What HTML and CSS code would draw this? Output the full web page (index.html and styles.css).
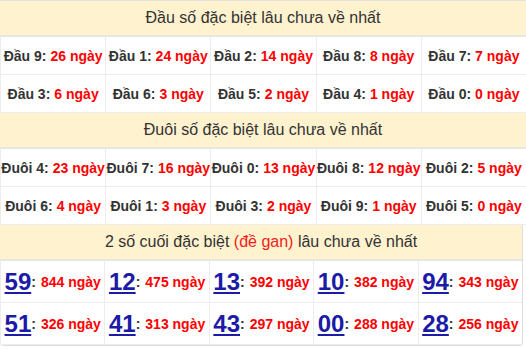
FILE: index.html
```html
<!DOCTYPE html>
<html lang="vi">
<head>
<meta charset="utf-8">
<link rel="stylesheet" href="styles.css">
</head>
<body>
<div class="wrap">
  <section class="block">
    <div class="head">Đầu số đặc biệt lâu chưa về nhất</div>
    <div class="grid">
      <div class="cell">Đầu 9: <span class="red">26 ngày</span></div>
      <div class="cell">Đầu 1: <span class="red">24 ngày</span></div>
      <div class="cell">Đầu 2: <span class="red">14 ngày</span></div>
      <div class="cell">Đầu 8: <span class="red">8 ngày</span></div>
      <div class="cell">Đầu 7: <span class="red">7 ngày</span></div>
      <div class="cell">Đầu 3: <span class="red">6 ngày</span></div>
      <div class="cell">Đầu 6: <span class="red">3 ngày</span></div>
      <div class="cell">Đầu 5: <span class="red">2 ngày</span></div>
      <div class="cell">Đầu 4: <span class="red">1 ngày</span></div>
      <div class="cell">Đầu 0: <span class="red">0 ngày</span></div>
    </div>
  </section>
  <section class="block">
    <div class="head">Đuôi số đặc biệt lâu chưa về nhất</div>
    <div class="grid">
      <div class="cell">Đuôi 4: <span class="red">23 ngày</span></div>
      <div class="cell">Đuôi 7: <span class="red">16 ngày</span></div>
      <div class="cell">Đuôi 0: <span class="red">13 ngày</span></div>
      <div class="cell">Đuôi 8: <span class="red">12 ngày</span></div>
      <div class="cell">Đuôi 2: <span class="red">5 ngày</span></div>
      <div class="cell">Đuôi 6: <span class="red">4 ngày</span></div>
      <div class="cell">Đuôi 1: <span class="red">3 ngày</span></div>
      <div class="cell">Đuôi 3: <span class="red">2 ngày</span></div>
      <div class="cell">Đuôi 9: <span class="red">1 ngày</span></div>
      <div class="cell">Đuôi 5: <span class="red">0 ngày</span></div>
    </div>
  </section>
  <section class="block last">
    <div class="head">2 số cuối đặc biệt <span class="gan">(đề gan)</span> lâu chưa về nhất</div>
    <div class="grid big">
      <div class="cell"><a class="num">59</a>: <span class="red sm">844 ngày</span></div>
      <div class="cell"><a class="num">12</a>: <span class="red sm">475 ngày</span></div>
      <div class="cell"><a class="num">13</a>: <span class="red sm">392 ngày</span></div>
      <div class="cell"><a class="num">10</a>: <span class="red sm">382 ngày</span></div>
      <div class="cell"><a class="num">94</a>: <span class="red sm">343 ngày</span></div>
      <div class="cell"><a class="num">51</a>: <span class="red sm">326 ngày</span></div>
      <div class="cell"><a class="num">41</a>: <span class="red sm">313 ngày</span></div>
      <div class="cell"><a class="num">43</a>: <span class="red sm">297 ngày</span></div>
      <div class="cell"><a class="num">00</a>: <span class="red sm">288 ngày</span></div>
      <div class="cell"><a class="num">28</a>: <span class="red sm">256 ngày</span></div>
    </div>
  </section>
</div>
</body>
</html>
```
FILE: styles.css
```css
* { box-sizing: border-box; }
html, body {
  margin: 0;
  padding: 0;
  background: #fff;
}
body {
  font-family: "Liberation Sans", Arial, sans-serif;
  color: #333;
}
.wrap {
  width: 526px;
  border-top: 1px solid #e3e3e3;
}
.head {
  background: #fff2cf;
  height: 36px;
  border-bottom: 2px solid #e6e6e6;
  font-size: 16px;
  line-height: 34px;
  text-align: center;
  color: #333;
}
.gan { color: #f21c1c; }
.grid {
  display: grid;
  grid-template-columns: repeat(5, 1fr);
  grid-auto-rows: 38px;
}
.cell {
  display: flex;
  align-items: center;
  justify-content: center;
  white-space: nowrap;
  font-size: 14px;
  font-weight: bold;
  color: #333;
  border-left: 1px solid #ececec;
  border-bottom: 1px solid #ececec;
}
.red { color: #ff0000; margin-left: 4px; }
.big { grid-auto-rows: 42px; }
.last {
  width: 523px;
  border-right: 1px solid #ddd;
  border-bottom: 1px solid #ddd;
  border-radius: 0 0 4px 4px;
  overflow: hidden;
}
.num {
  color: #1b1ba8;
  font-size: 24px;
  font-weight: bold;
  text-decoration: underline;
  text-underline-offset: 2px;
}
.sm { font-size: 14px; margin-left: 5px; }
```
